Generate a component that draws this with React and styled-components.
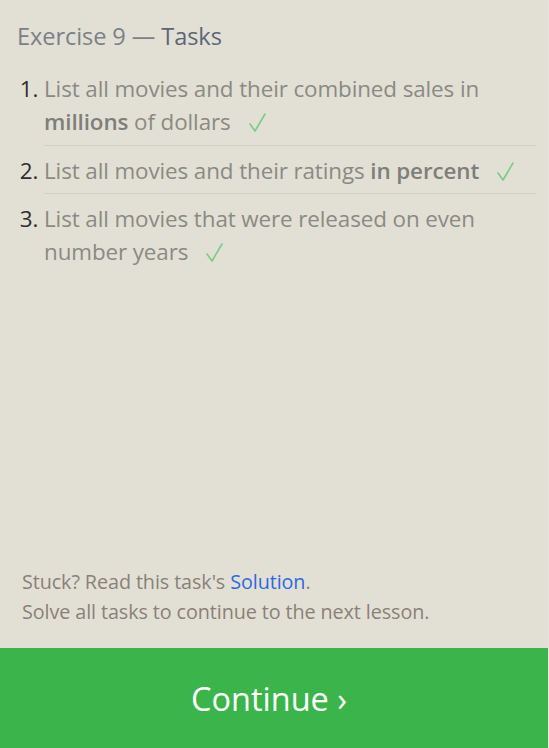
import styled, { createGlobalStyle } from 'styled-components'

const GlobalStyle = createGlobalStyle`
  html, body {
    margin: 0;
    padding: 0;
  }
  body {
    background-color: #E2E0D5;
    font-family: 'Open Sans', 'Noto Sans', sans-serif;
  }
`

const Page = styled.div`
  box-sizing: border-box;
  border-right: 1px solid #E8E6DD;
  display: flex;
  flex-direction: column;
  height: 100vh;
  width: 100%;
`

const Body = styled.div`
  flex: 1;
  padding: 19px 12px 0 17px;
`

const Heading = styled.h2`
  color: #7B8087;
  font-size: 23.6px;
  font-weight: 400;
  letter-spacing: -0.1px;
  line-height: 34px;
  margin: 0 0 11px 0;
`

const HeadingStrong = styled.span`
  color: #5E6676;
`

const TaskList = styled.ol`
  margin: 0;
  padding: 0 0 0 27px;
`

const Task = styled.li`
  border-top: ${props => (props.$first ? 'none' : '1px solid #D3D1C6')};
  color: #8A8A84;
  font-size: 22.4px;
  letter-spacing: -0.1px;
  line-height: 33px;
  padding: 8px 0 ${props => (props.$first ? 7 : 6)}px 0;

  &::marker {
    color: #2E2E2E;
  }
`

const Strong = styled.b`
  color: #7E7E7A;
  font-weight: 600;
`

const CheckIcon = styled.svg`
  display: inline-block;
  height: 19px;
  margin-left: 18px;
  vertical-align: -2px;
  width: 17px;
`

const Footer = styled.div`
  color: #8A8078;
  font-size: 19.8px;
  letter-spacing: -0.1px;
  line-height: 30px;
  padding: 0 0 21px 22px;
`

const SolutionLink = styled.a`
  color: #2F68E0;
  text-decoration: none;
`

const ContinueButton = styled.button`
  background-color: #3BB54B;
  border: none;
  color: #FFFFFF;
  cursor: pointer;
  font-family: inherit;
  font-size: 32.5px;
  height: 100px;
  padding: 0 10px 0 0;
  width: 100%;
`

function Check() {
  return (
    <CheckIcon viewBox="0 0 17 19" fill="none" stroke="#7CCB84" strokeWidth="1.6" strokeLinecap="round" strokeLinejoin="round">
      <polyline points="1,11 6,18 16,1" />
    </CheckIcon>
  )
}

const tasks = [
  <>List all movies and their combined sales in <Strong>millions</Strong> of dollars</>,
  <>List all movies and their ratings <Strong>in percent</Strong></>,
  <>List all movies that were released on even number years</>
]

export default function App() {
  return (
    <Page>
      <GlobalStyle />
      <Body>
        <Heading>Exercise 9 — <HeadingStrong>Tasks</HeadingStrong></Heading>
        <TaskList>
          {tasks.map((task, i) => (
            <Task key={i} $first={i === 0}>
              {task}<Check />
            </Task>
          ))}
        </TaskList>
      </Body>
      <Footer>
        Stuck? Read this task's <SolutionLink href="#">Solution</SolutionLink>.
        <br />
        Solve all tasks to continue to the next lesson.
      </Footer>
      <ContinueButton>Continue ›</ContinueButton>
    </Page>
  )
}
